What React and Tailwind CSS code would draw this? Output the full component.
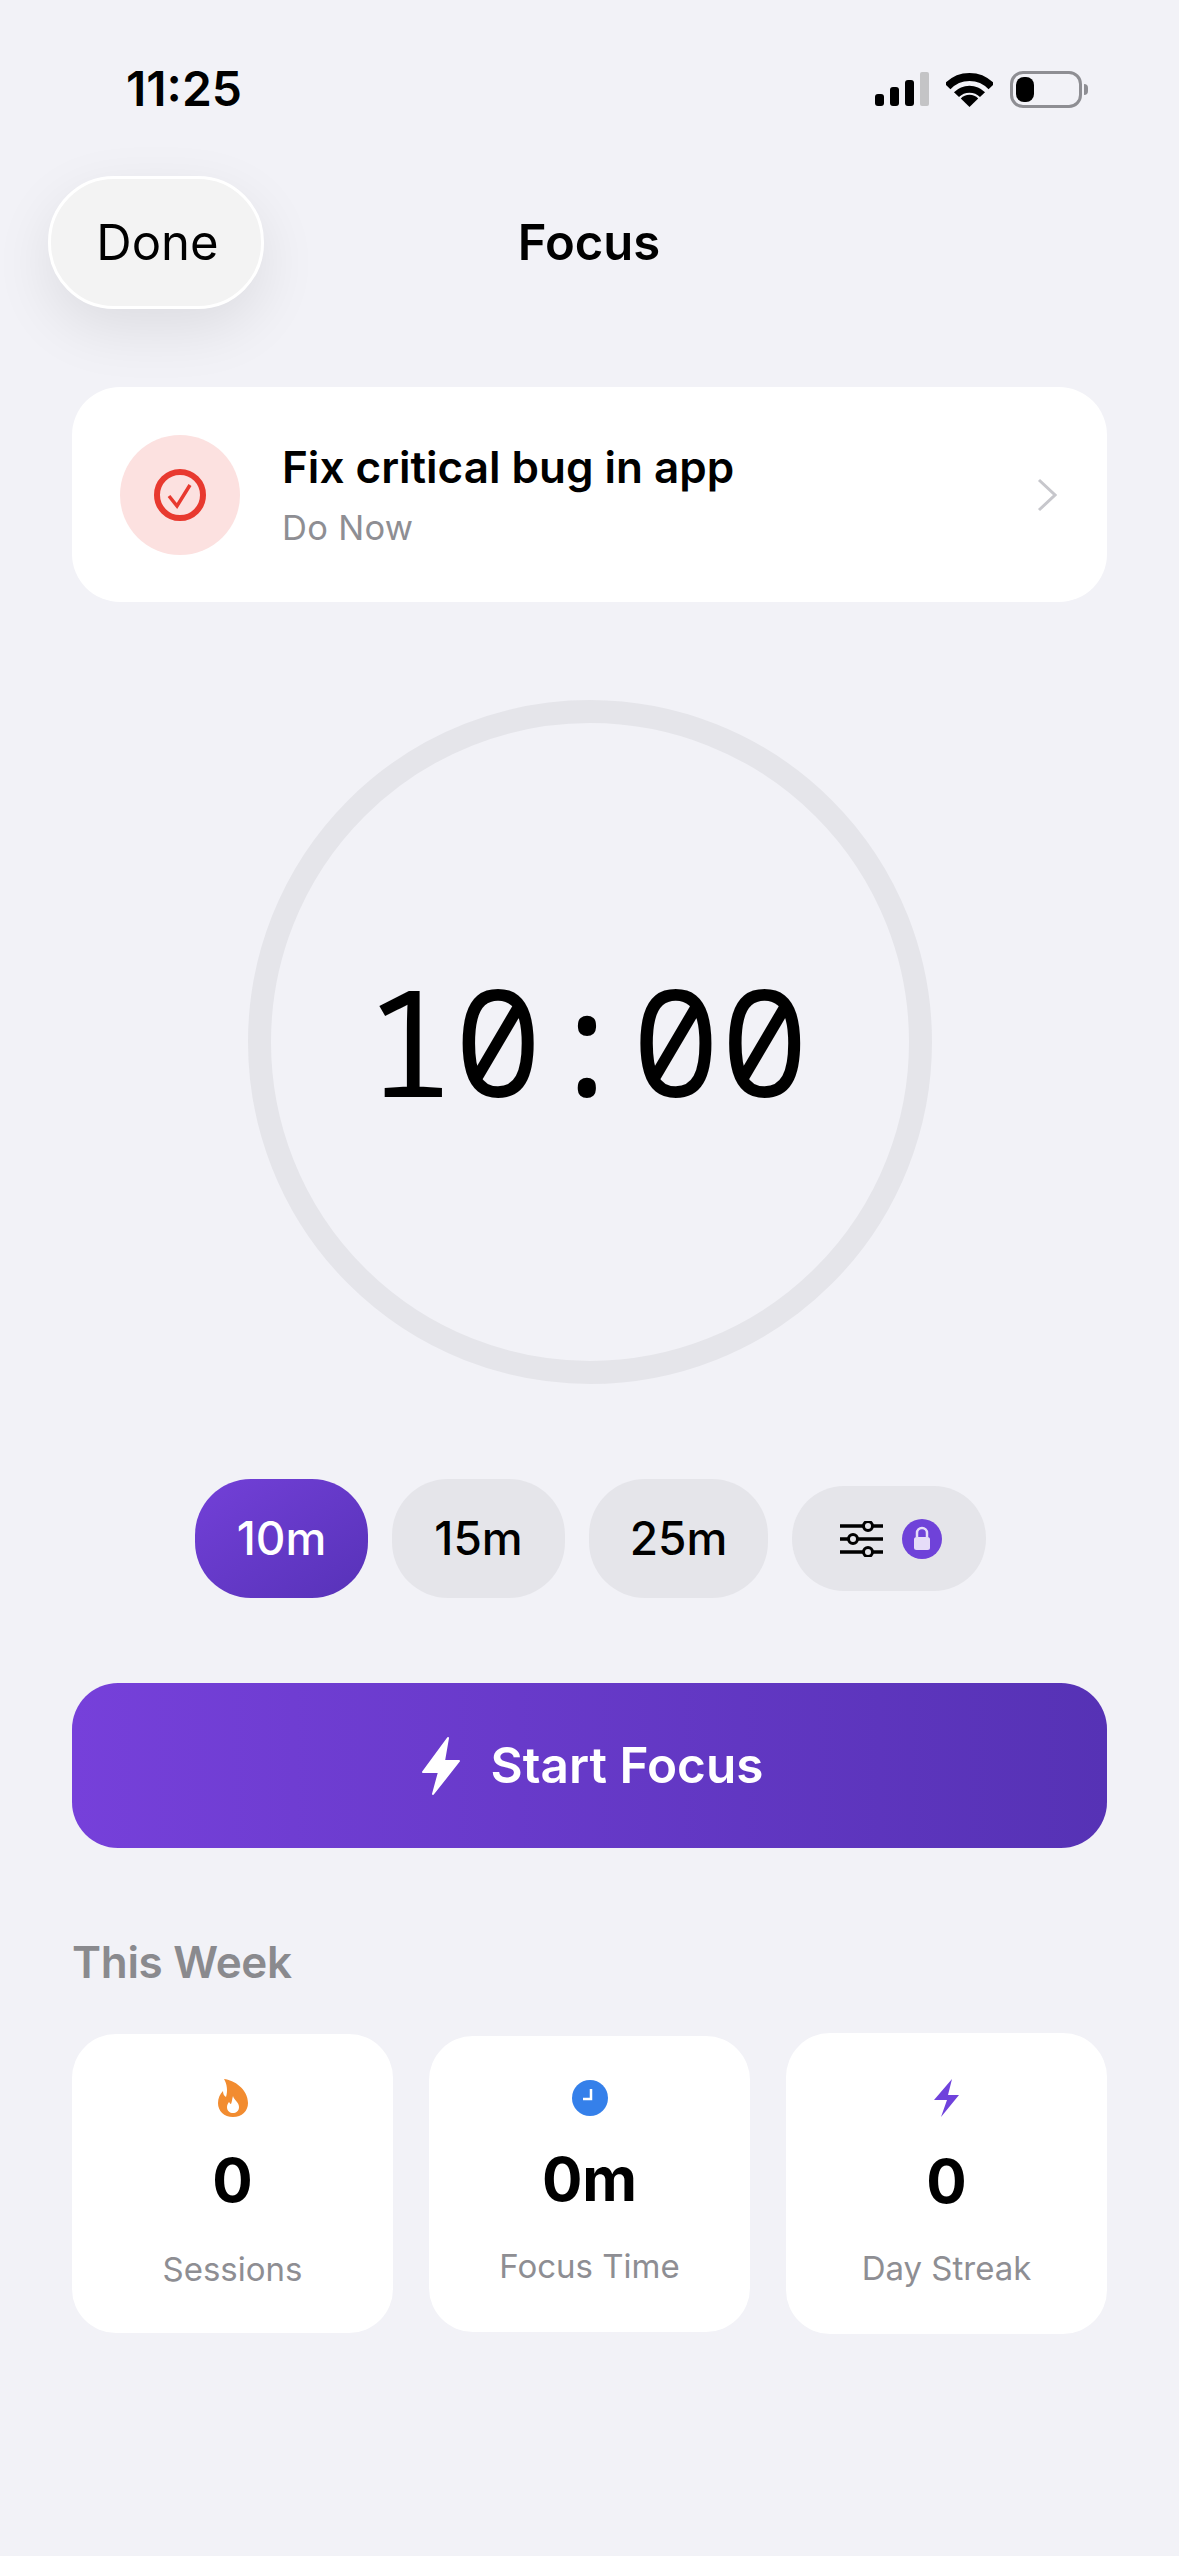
import React from "react";

const Stat = ({ icon, value, label, cardClass, iconClass, valueClass, labelClass }) => (
  <div className={`w-[321px] bg-white rounded-[44px] flex flex-col items-center ${cardClass}`}>
    <div className={`flex items-center justify-center ${iconClass}`}>{icon}</div>
    <div className={`text-[60px] leading-none font-bold text-black ${valueClass}`}>{value}</div>
    <div className={`text-[33px] leading-none text-[#8e8e93] ${labelClass}`}>{label}</div>
  </div>
);

const Pill = ({ children, active, width }) => (
  <button
    className={`h-[119px] rounded-[56px] text-[46px] font-medium flex items-center justify-center ${width} ${
      active ? "bg-gradient-to-br from-[#7340d8] to-[#5732b8] text-white" : "bg-[#e5e5ea] text-black"
    }`}
  >
    {children}
  </button>
);

export default function App() {
  return (
    <div className="w-[1179px] h-[2556px] bg-[#f2f2f7] font-[Inter,sans-serif] overflow-hidden">
      {/* status bar */}
      <div className="flex items-center justify-between pt-[66px] pl-[126px] pr-[91px] h-[112px]">
        <span className="text-[48px] leading-none font-semibold text-black">11:25</span>
        <div className="flex items-center">
          <svg width="54" height="34" viewBox="0 0 54 34" className="mr-[17px]">
            <rect x="0" y="22" width="9" height="12" rx="3" fill="#000" />
            <rect x="15" y="15" width="9" height="19" rx="3" fill="#000" />
            <rect x="30" y="8" width="9" height="26" rx="3" fill="#000" />
            <rect x="45" y="0" width="9" height="34" rx="2" fill="#c4c4c6" />
          </svg>
          <svg width="47" height="35" viewBox="0 0 47 35" className="mr-[17px]">
            <path d="M1.5 14.5 A30 30 0 0 1 45.5 14.5" fill="none" stroke="#000" strokeWidth="8" />
            <path d="M10.5 22.7 A18 18 0 0 1 36.5 22.7" fill="none" stroke="#000" strokeWidth="7" />
            <path d="M23.5 35 L14.8 26.5 A12 12 0 0 1 32.2 26.5 Z" fill="#000" />
          </svg>
          <div className="w-[72px] h-[37px] rounded-[13px] border-[3px] border-[#8e8e93] p-[3px] flex">
            <div className="w-[18px] h-full rounded-[8px] bg-black" />
          </div>
          <div className="w-[4px] h-[11px] ml-[2px] bg-[#8e8e93] rounded-r-[4px]" />
        </div>
      </div>

      {/* nav */}
      <div className="grid grid-cols-[1fr_auto_1fr] items-center pl-[48px] pr-[49px] mt-[64px]">
        <button className="justify-self-start w-[216px] h-[133px] pl-[3px] rounded-[66px] bg-[#f3f3f3] border-[3px] border-white text-[49px] text-black shadow-[0_20px_60px_rgba(0,0,0,0.09)]">
          Done
        </button>
        <h1 className="text-[49px] font-semibold text-black leading-none">Focus</h1>
        <div />
      </div>

      <div className="px-[72px]">
        {/* task card */}
        <div className="mt-[78px] h-[215px] bg-white rounded-[48px] flex items-center pl-[48px] pr-[50px]">
          <div className="w-[120px] h-[120px] rounded-full bg-[#fce1e0] flex items-center justify-center shrink-0">
            <svg width="52" height="52" viewBox="0 0 52 52" fill="none" stroke="#e8392f">
              <circle cx="26" cy="26" r="23" strokeWidth="6" />
              <path d="M15 27 L23 37 L36 16" strokeWidth="3.5" />
            </svg>
          </div>
          <div className="ml-[42px] flex-1 pt-[1px]">
            <div className="text-[44px] leading-none font-semibold text-black">Fix critical bug in app</div>
            <div className="mt-[22px] text-[34.5px] leading-none text-[#8e8e93] tracking-[0.3px]">Do Now</div>
          </div>
          <svg width="20" height="34" viewBox="0 0 20 34" fill="none" stroke="#c7c7cc" strokeWidth="3">
            <path d="M2 2 L18 17 L2 32" />
          </svg>
        </div>

        {/* timer */}
        <div className="flex justify-center mt-[98px]">
          <div className="w-[684px] h-[684px] rounded-full border-[23px] border-[#e5e5ea] flex items-center justify-center">
            <span className="text-[148px] leading-none text-black mr-[5px] mb-[4px] font-['Noto_Sans_Mono',monospace]">10:00</span>
          </div>
        </div>

        {/* durations */}
        <div className="flex items-center justify-center gap-[24px] mt-[95px] ml-[2px]">
          <Pill active width="w-[173px]">10m</Pill>
          <Pill width="w-[173px]">15m</Pill>
          <Pill width="w-[179px]">25m</Pill>
          <button className="w-[194px] h-[105px] pl-[3px] rounded-[52px] bg-[#e5e5ea] flex items-center justify-center gap-[19px]">
            <svg width="43" height="36" viewBox="0 0 43 36" fill="#e5e5ea" stroke="#000" strokeWidth="3.5">
              <path d="M0 5 H43 M0 18 H43 M0 31 H43" />
              <circle cx="28" cy="5" r="4.5" strokeWidth="3" />
              <circle cx="13" cy="18" r="4.5" strokeWidth="3" />
              <circle cx="28" cy="31" r="4.5" strokeWidth="3" />
            </svg>
            <svg width="40" height="40" viewBox="0 0 40 40">
              <circle cx="20" cy="20" r="20" fill="#6f42d9" />
              <rect x="12" y="18" width="16" height="13" rx="2.5" fill="#e6dcf8" />
              <path d="M15 18 V14 A5 5 0 0 1 25 14 V18" fill="none" stroke="#e6dcf8" strokeWidth="2.5" />
            </svg>
          </button>
        </div>

        {/* start button */}
        <button className="w-full h-[165px] mt-[85px] pl-[6px] rounded-[46px] bg-gradient-to-r from-[#7640da] to-[#5632b5] flex items-center justify-center gap-[31px] text-white">
          <svg width="38" height="58" viewBox="0 0 38 58" fill="#fff" stroke="#fff" strokeWidth="2" strokeLinejoin="round">
            <path d="M26 1 L1 35 H17 L11 57 L37 24 H22 Z" />
          </svg>
          <span className="text-[49.5px] leading-none font-semibold">Start Focus</span>
        </button>

        {/* this week */}
        <h2 className="mt-[92px] text-[44px] leading-none font-semibold text-[#8a8a8e] tracking-[-0.3px]">This Week</h2>

        <div className="mt-[49px] flex items-center gap-[36px]">
          <Stat
            icon={
              <svg width="30" height="38" viewBox="0 0 30 38">
                <path fill="#f28c30" d="M6 0 C16 1 30 10 30 24 C30 32 24 38 15 38 C6 38 0 32 0 24 C0 19 2 15 5 12 C5 15 6 17 8 18 C10 12 9 5 6 0 Z" />
                <path fill="#fff" d="M15 17 C16 21 21 23 21 28 C21 32 18 34 15 34 C12 34 9 32 9 28 C9 26 10 24 11 23 C12 24 12 25 13 25 C14 23 14 20 15 17 Z" />
              </svg>
            }
            value="0"
            label="Sessions"
            cardClass="h-[299px] pt-[45px]"
            iconClass="h-[38px]"
            valueClass="mt-[33px]"
            labelClass="mt-[43px]"
          />
          <Stat
            icon={
              <svg width="36" height="36" viewBox="0 0 36 36">
                <circle cx="18" cy="18" r="18" fill="#3580ea" />
                <path d="M19 9 V19 H11" fill="none" stroke="#fff" strokeWidth="2.5" />
              </svg>
            }
            value="0m"
            label="Focus Time"
            cardClass="h-[296px] pt-[44px]"
            iconClass="h-[36px]"
            valueClass="mt-[33px]"
            labelClass="mt-[41px]"
          />
          <Stat
            icon={
              <svg width="25" height="39" viewBox="0 0 25 39">
                <path fill="#6f42dc" d="M18 1 L0 22 H13 L7 39 L25 17 H14 Z" />
              </svg>
            }
            value="0"
            label="Day Streak"
            cardClass="h-[301px] pt-[45px]"
            iconClass="h-[39px]"
            valueClass="mt-[34px]"
            labelClass="mt-[41px]"
          />
        </div>
      </div>
    </div>
  );
}
